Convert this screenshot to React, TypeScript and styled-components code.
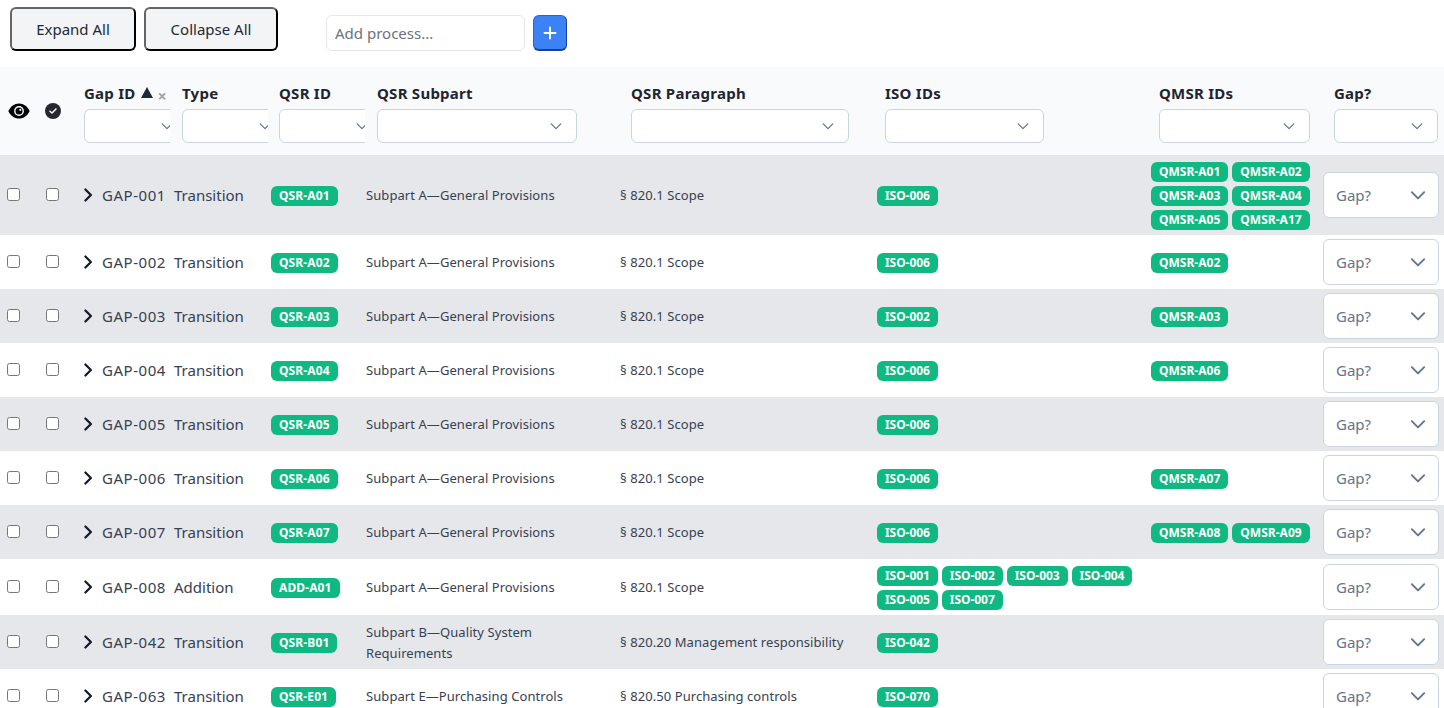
import React from 'react';
import styled, { createGlobalStyle } from 'styled-components';

const Global = createGlobalStyle`
  html, body { margin: 0; padding: 0; background: #fff; overflow: hidden; }
  body { font-family: "Noto Sans", "Open Sans", sans-serif; color: #1f2937; }
`;

const Page = styled.div`
  width: 1444px;
  height: 708px;
  overflow: hidden;
`;

const Toolbar = styled.div`
  display: flex;
  align-items: flex-end;
  gap: 8px;
  height: 67px;
  box-sizing: border-box;
  padding: 7px 0 16px 10px;
`;

const OutlineButton = styled.button<{ $w: number }>`
  width: ${p => p.$w}px;
  height: 44px;
  box-sizing: border-box;
  border: 2px outset #111;
  border-radius: 6px;
  background: #f3f4f6;
  color: #1f2937;
  font: 15px "Noto Sans", sans-serif;
`;

const ProcessInput = styled.input`
  width: 199px;
  height: 36px;
  box-sizing: border-box;
  margin-left: 40px;
  padding: 0 8px;
  border: 1px solid #e5e7eb;
  border-radius: 6px;
  font: 15px "Noto Sans", sans-serif;
  &::placeholder { color: #6b7280; opacity: 1; }
`;

const PlusButton = styled.button`
  width: 34px;
  height: 36px;
  box-sizing: border-box;
  display: flex;
  align-items: center;
  justify-content: center;
  padding: 0;
  border: 1px outset #2563eb;
  border-bottom-width: 2px;
  border-radius: 6px;
  background: #3b82f6;
  color: #fff;
`;

const HeaderRow = styled.div`
  display: grid;
  grid-template-columns: 37px 39px 98px 97px 98px 254px 254px 274px 175px 110px;
  height: 88px;
  box-sizing: border-box;
  padding-left: 8px;
  background: #f8fafc;
`;

const IconCell = styled.div`
  display: flex;
  align-items: center;
  color: #111827;
`;

const HeaderCell = styled.div`
  display: flex;
  flex-direction: column;
  min-width: 0;
  padding-top: 15px;
`;

const Title = styled.div`
  display: flex;
  align-items: center;
  height: 22px;
  margin-bottom: 5px;
  font-size: 15px;
  font-weight: 700;
  line-height: 22px;
  letter-spacing: 0.25px;
  color: #1f2430;
  white-space: nowrap;
`;

const SortMark = styled.svg`
  margin: -2px 0 0 5px;
  color: #1f2937;
`;

const ClearMark = styled.span`
  margin: 5px 0 0 5px;
  font-size: 16px;
  font-weight: 700;
  color: #9ca3af;
`;

const FilterClip = styled.div<{ $w: number }>`
  width: ${p => p.$w}px;
  overflow: hidden;
`;

const FilterBox = styled.div<{ $w: number }>`
  display: flex;
  align-items: center;
  justify-content: flex-end;
  width: ${p => p.$w}px;
  height: 34px;
  box-sizing: border-box;
  padding-right: 13px;
  background: #fff;
  border: 1px solid #cbd5e1;
  border-radius: 6px;
  color: #64748b;
`;

const Row = styled.div<{ $shade: boolean }>`
  display: grid;
  grid-template-columns: 39px 38px 18px 72px 97px 95px 254px 257px 274px 172px 121px;
  align-items: center;
  min-height: 54px;
  box-sizing: border-box;
  padding: 4px 0 4px 7px;
  background: ${p => (p.$shade ? '#e5e7eb' : '#fff')};
`;

const Check = styled.input.attrs({ type: 'checkbox' })`
  display: block;
  width: 13px;
  height: 13px;
  margin: 0 0 2px;
`;

const Chevron = styled.span`
  display: flex;
  color: #111827;
`;

const IdText = styled.span`
  font-size: 15px;
  letter-spacing: 0.55px;
  color: #374151;
  white-space: nowrap;
`;

const TypeText = styled.span`
  font-size: 15px;
  color: #374151;
  white-space: nowrap;
`;

const SmallText = styled.span`
  display: block;
  max-width: 225px;
  padding-top: 1px;
  font-size: 13px;
  line-height: 21px;
  letter-spacing: 0.07px;
  color: #374151;
`;

const Pills = styled.div`
  display: flex;
  flex-wrap: wrap;
  gap: 4px;
  padding: 3px 0 1px;
`;

const Pill = styled.span<{ $spread: number }>`
  display: inline-block;
  height: 20px;
  padding: 0 8px;
  border-radius: 6px;
  background: #10b981;
  color: #fff;
  font-size: 12px;
  font-weight: 700;
  line-height: 20px;
  letter-spacing: ${p => p.$spread}px;
  white-space: nowrap;
`;

const GapSelect = styled.div`
  display: flex;
  align-items: center;
  justify-content: space-between;
  width: 116px;
  height: 46px;
  box-sizing: border-box;
  padding: 0 11px 0 12px;
  background: #fff;
  border: 1px solid #cbd5e1;
  border-radius: 6px;
  font-size: 15px;
  color: #64748b;
`;

const EyeIcon = () => (
  <svg width="22" height="16" viewBox="0 0 22 16">
    <path d="M0.3 8C2.6 3.2 6.4 0.4 11 0.4S19.4 3.2 21.7 8C19.4 12.8 15.6 15.6 11 15.6S2.6 12.8 0.3 8Z" fill="#000" />
    <circle cx="11" cy="8" r="4.9" fill="#fff" />
    <circle cx="11" cy="8" r="3.5" fill="#000" />
    <circle cx="12.3" cy="6.8" r="1.1" fill="#fff" />
  </svg>
);

const DoneIcon = () => (
  <svg width="16" height="16" viewBox="0 0 16 16" fill="none">
    <circle cx="8" cy="8" r="8" fill="#27272f" />
    <path d="M5 8.3 7 10l4-4" stroke="#fff" strokeWidth="1.5" strokeLinecap="round" strokeLinejoin="round" />
  </svg>
);

const ChevronDown = ({ size, weight }: { size: number; weight: number }) => (
  <svg width={size} height={size} viewBox="0 0 16 16" fill="none" stroke="currentColor" strokeWidth={weight} strokeLinecap="round" strokeLinejoin="round">
    <path d="M2.5 5.5 8 11l5.5-5.5" />
  </svg>
);

const ChevronRight = () => (
  <svg width="10" height="14" viewBox="0 0 10 14" fill="none" stroke="currentColor" strokeWidth="2.2" strokeLinecap="round" strokeLinejoin="round">
    <path d="M1.4 1.5 6.9 7 1.4 12.5" />
  </svg>
);

const Plus = () => (
  <svg width="14" height="14" viewBox="0 0 14 14" fill="none" stroke="currentColor" strokeWidth="2" strokeLinecap="round">
    <path d="M7 1.5v11M1.5 7h11" />
  </svg>
);

const headers = [
  { title: 'Type', w: 86, inner: 104 },
  { title: 'QSR ID', w: 86, inner: 104 },
  { title: 'QSR Subpart', w: 200, inner: 200 },
  { title: 'QSR Paragraph', w: 218, inner: 218 },
  { title: 'ISO IDs', w: 159, inner: 159 },
  { title: 'QMSR IDs', w: 151, inner: 151 },
  { title: 'Gap?', w: 104, inner: 104 },
];

const A = 'Subpart A—General Provisions';
const P = '§ 820.1 Scope';

const rows = [
  { id: 'GAP-001', type: 'Transition', qsr: 'QSR-A01', sub: A, par: P, iso: ['ISO-006'], qmsr: ['QMSR-A01', 'QMSR-A02', 'QMSR-A03', 'QMSR-A04', 'QMSR-A05', 'QMSR-A17'] },
  { id: 'GAP-002', type: 'Transition', qsr: 'QSR-A02', sub: A, par: P, iso: ['ISO-006'], qmsr: ['QMSR-A02'] },
  { id: 'GAP-003', type: 'Transition', qsr: 'QSR-A03', sub: A, par: P, iso: ['ISO-002'], qmsr: ['QMSR-A03'] },
  { id: 'GAP-004', type: 'Transition', qsr: 'QSR-A04', sub: A, par: P, iso: ['ISO-006'], qmsr: ['QMSR-A06'] },
  { id: 'GAP-005', type: 'Transition', qsr: 'QSR-A05', sub: A, par: P, iso: ['ISO-006'], qmsr: [] },
  { id: 'GAP-006', type: 'Transition', qsr: 'QSR-A06', sub: A, par: P, iso: ['ISO-006'], qmsr: ['QMSR-A07'] },
  { id: 'GAP-007', type: 'Transition', qsr: 'QSR-A07', sub: A, par: P, iso: ['ISO-006'], qmsr: ['QMSR-A08', 'QMSR-A09'] },
  { id: 'GAP-008', type: 'Addition', qsr: 'ADD-A01', sub: A, par: P, iso: ['ISO-001', 'ISO-002', 'ISO-003', 'ISO-004', 'ISO-005', 'ISO-007'], qmsr: [] },
  { id: 'GAP-042', type: 'Transition', qsr: 'QSR-B01', sub: 'Subpart B—Quality System Requirements', par: '§ 820.20 Management responsibility', iso: ['ISO-042'], qmsr: [] },
  { id: 'GAP-063', type: 'Transition', qsr: 'QSR-E01', sub: 'Subpart E—Purchasing Controls', par: '§ 820.50 Purchasing controls', iso: ['ISO-070'], qmsr: [] },
];

export default function App() {
  return (
    <Page>
      <Global />
      <Toolbar>
        <OutlineButton $w={126}>Expand All</OutlineButton>
        <OutlineButton $w={134}>Collapse All</OutlineButton>
        <ProcessInput placeholder="Add process..." />
        <PlusButton aria-label="Add"><Plus /></PlusButton>
      </Toolbar>
      <HeaderRow>
        <IconCell><EyeIcon /></IconCell>
        <IconCell><DoneIcon /></IconCell>
        <HeaderCell>
          <Title>
            Gap ID
            <SortMark width="12" height="11" viewBox="0 0 12 11"><path d="M6 0 12 11H0Z" fill="currentColor" /></SortMark>
            <ClearMark>×</ClearMark>
          </Title>
          <FilterClip $w={86}><FilterBox $w={104}><ChevronDown size={14} weight={1.4} /></FilterBox></FilterClip>
        </HeaderCell>
        {headers.map(h => (
          <HeaderCell key={h.title}>
            <Title>{h.title}</Title>
            <FilterClip $w={h.w}><FilterBox $w={h.inner}><ChevronDown size={14} weight={1.4} /></FilterBox></FilterClip>
          </HeaderCell>
        ))}
      </HeaderRow>
      {rows.map((r, i) => (
        <Row key={r.id} $shade={i % 2 === 0}>
          <Check />
          <Check />
          <Chevron><ChevronRight /></Chevron>
          <IdText>{r.id}</IdText>
          <TypeText>{r.type}</TypeText>
          <Pills><Pill $spread={0.12}>{r.qsr}</Pill></Pills>
          <SmallText>{r.sub}</SmallText>
          <SmallText>{r.par}</SmallText>
          <Pills>{r.iso.map(x => <Pill key={x} $spread={-0.05}>{x}</Pill>)}</Pills>
          <Pills>{r.qmsr.map(x => <Pill key={x} $spread={0.02}>{x}</Pill>)}</Pills>
          <GapSelect>Gap?<ChevronDown size={18} weight={1.7} /></GapSelect>
        </Row>
      ))}
    </Page>
  );
}
